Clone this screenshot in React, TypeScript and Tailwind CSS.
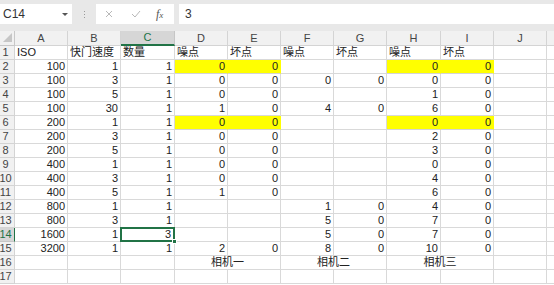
const cols = ["A", "B", "C", "D", "E", "F", "G", "H", "I", "J"];

const data: string[][] = [
  ["ISO", "快门速度", "数量", "噪点", "坏点", "噪点", "坏点", "噪点", "坏点", ""],
  ["100", "1", "1", "0", "0", "", "", "0", "0", ""],
  ["100", "3", "1", "0", "0", "0", "0", "0", "0", ""],
  ["100", "5", "1", "0", "0", "", "", "1", "0", ""],
  ["100", "30", "1", "1", "0", "4", "0", "6", "0", ""],
  ["200", "1", "1", "0", "0", "", "", "0", "0", ""],
  ["200", "3", "1", "0", "0", "", "", "2", "0", ""],
  ["200", "5", "1", "0", "0", "", "", "3", "0", ""],
  ["400", "1", "1", "0", "0", "", "", "0", "0", ""],
  ["400", "3", "1", "0", "0", "", "", "4", "0", ""],
  ["400", "5", "1", "1", "0", "", "", "6", "0", ""],
  ["800", "1", "1", "", "", "1", "0", "4", "0", ""],
  ["800", "3", "1", "", "", "5", "0", "7", "0", ""],
  ["1600", "1", "3", "", "", "5", "0", "7", "0", ""],
  ["3200", "1", "1", "2", "0", "8", "0", "10", "0", ""],
];

const yellow = new Set(["D2", "E2", "D6", "E6", "H2", "I2", "H6", "I6"]);

function RowHead({ n }: { n: number }) {
  const sel = n === 14;
  return (
    <div
      className={
        "flex h-[14px] overflow-hidden border-b border-r " +
        (sel
          ? "border-b-[#c6c6c6] border-r-[#217346] bg-[#d6d6d6] text-[#217346]"
          : "border-[#d4d4d4] bg-[#f1f1f1] text-[#444]")
      }
    >
      <div className="flex w-[11px] shrink-0 items-center justify-center text-[11px] leading-none">{n}</div>
    </div>
  );
}

function Cell({ v, id }: { v: string; id: string }) {
  const num = /^[0-9]+$/.test(v);
  const y = yellow.has(id);
  return (
    <div
      className={
        "flex h-[14px] items-center overflow-visible whitespace-nowrap border-b border-r px-[2px] leading-none text-[#222] " +
        (num ? "justify-end " : "justify-start ") +
        (y ? "border-r-[#ffff00] border-b-[#d4d4d4] bg-[#ffff00]" : "border-[#d9d9d9]")
      }
    >
      {v}
    </div>
  );
}

export default function App() {
  return (
    <div className="h-[285px] w-[554px] overflow-hidden bg-white font-['Liberation_Sans','Noto_Sans_CJK_SC',sans-serif] text-[11px]">
      <div className="flex h-[31px] bg-[#e8e8e8] pt-[4px]">
        <div className="flex h-[20px] w-[72px] items-center justify-between bg-white pl-[3px] pr-[4px] text-[12px] text-[#333]">
          <span>C14</span>
          <span className="h-0 w-0 border-x-[3px] border-t-[3px] border-x-transparent border-t-[#555]" />
        </div>
        <div className="flex h-[20px] w-[24px] flex-col items-center justify-center gap-[2px]">
          <span className="h-[1px] w-[1px] bg-[#999]" />
          <span className="h-[1px] w-[1px] bg-[#999]" />
          <span className="h-[1px] w-[1px] bg-[#999]" />
        </div>
        <div className="flex h-[20px] w-[78px] items-center bg-white text-[#b5b5b5]">
          <svg className="ml-[9px]" width="8" height="8" viewBox="0 0 8 8">
            <path d="M1 1L7 7M7 1L1 7" stroke="#b8b8b8" strokeWidth="1" fill="none" />
          </svg>
          <svg className="ml-[18px]" width="10" height="8" viewBox="0 0 10 8">
            <path d="M1 4L4 7L9 1" stroke="#b8b8b8" strokeWidth="1" fill="none" />
          </svg>
          <span className="ml-[15px] font-['Liberation_Serif',serif] text-[12px] italic text-[#555]">
            f<span className="text-[9px]">x</span>
          </span>
        </div>
        <div className="ml-[5px] flex h-[20px] flex-1 items-center bg-white pl-[6px] text-[12px] text-[#333]">3</div>
      </div>

      <div className="grid grid-cols-[15px_53px_53px_54px_53px_53px_53px_53px_54px_53px_53px_7px] grid-rows-[15px_repeat(17,14px)]">
        <div className="relative border-b border-r border-[#c8c8c8] bg-[#f1f1f1]">
          <span className="absolute bottom-[3px] right-[2px] h-0 w-0 border-b-[9px] border-l-[9px] border-b-[#c6c6c6] border-l-transparent" />
        </div>
        {cols.map((c) => (
          <div
            key={c}
            className={
              "flex items-center justify-center border-r leading-none " +
              (c === "C"
                ? "border-b-2 border-b-[#217346] border-r-[#c6c6c6] bg-[#d6d6d6] text-[#217346]"
                : "border-b border-[#d4d4d4] bg-[#f1f1f1] text-[#444]")
            }
          >
            {c}
          </div>
        ))}
        <div className="border-b border-[#d4d4d4] bg-[#f1f1f1]" />

        {data.map((row, i) => (
          <div key={i} className="contents">
            <RowHead n={i + 1} />
            {row.map((v, j) => {
              const id = cols[j] + (i + 1);
              if (id === "C14") {
                return (
                  <div key={id} className="relative h-[14px] border-b border-r border-[#d9d9d9]">
                    <div className="absolute inset-x-[-1px] bottom-[-1px] top-[-1px] flex items-center justify-end border-2 border-[#217346] pr-[2px] leading-none text-[#222]">
                      {v}
                    </div>
                    <span className="absolute bottom-[-3px] right-[-3px] h-[5px] w-[5px] border border-white bg-[#217346]" />
                  </div>
                );
              }
              return <Cell key={id} v={v} id={id} />;
            })}
            <div className="border-b border-[#d9d9d9]" />
          </div>
        ))}

        <RowHead n={16} />
        <div className="border-b border-r border-[#d9d9d9]" />
        <div className="border-b border-r border-[#d9d9d9]" />
        <div className="border-b border-r border-[#d9d9d9]" />
        <div className="col-span-2 flex items-center justify-center border-b border-r border-[#d9d9d9] leading-none text-[#222]">相机一</div>
        <div className="col-span-2 flex items-center justify-center border-b border-r border-[#d9d9d9] leading-none text-[#222]">相机二</div>
        <div className="col-span-2 flex items-center justify-center border-b border-r border-[#d9d9d9] leading-none text-[#222]">相机三</div>
        <div className="border-b border-r border-[#d9d9d9]" />
        <div className="border-b border-[#d9d9d9]" />

        <RowHead n={17} />
        {cols.map((c) => (
          <div key={c} className="border-b border-r border-[#d9d9d9]" />
        ))}
        <div className="border-b border-[#d9d9d9]" />
      </div>
    </div>
  );
}
